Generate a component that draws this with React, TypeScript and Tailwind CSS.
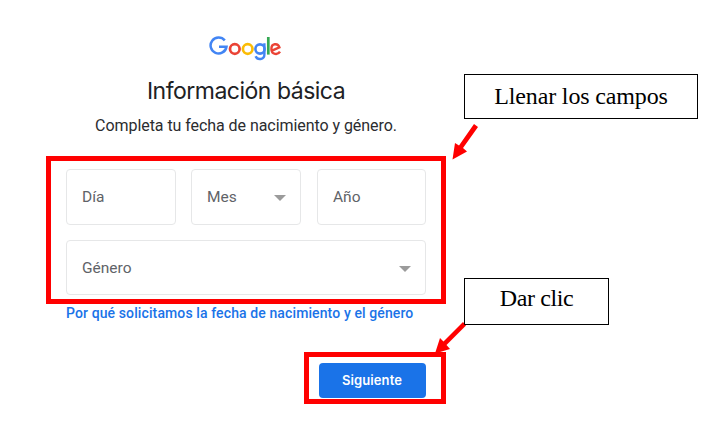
import React from "react";

function GoogleLogo() {
  return (
    <svg width="74" height="26" viewBox="208 36 74 26" fill="none" role="img" aria-label="Google">
      <path d="M223.8 40.4A8 8 0 1 0 225.5 46.7H218" stroke="#4285f4" strokeWidth="2.5" />
      <circle cx="233.8" cy="49" r="4.8" stroke="#ea4335" strokeWidth="2.7" />
      <circle cx="246.7" cy="49" r="4.8" stroke="#fbbc05" strokeWidth="2.7" />
      <circle cx="259" cy="49" r="4.6" stroke="#4285f4" strokeWidth="2.6" />
      <path d="M263.4 43.3V54.2C263.4 60 256.5 60.5 254.6 56.2" stroke="#4285f4" strokeWidth="2.4" />
      <path d="M267.3 37V54.6" stroke="#34a853" strokeWidth="2.7" />
      <path d="M271 50.6L278.4 47.3C276.9 42.8 270.2 43 270.4 49.2C270.6 54.7 276.8 55.3 279 51.6" stroke="#ea4335" strokeWidth="2.4" />
    </svg>
  );
}

function Caret() {
  return (
    <svg width="12" height="6" viewBox="0 0 12 6">
      <path d="M0 0H12L6 6Z" fill="#9b9b9b" />
    </svg>
  );
}

function Field({ label, select }: { label: string; select?: boolean }) {
  return (
    <div className="flex h-full items-center justify-between rounded-[4px] border border-[#e6e7e8] pl-[15px] pr-3.5 pt-0.5 text-[15.5px] text-[#5f6368]">
      <span>{label}</span>
      {select && <Caret />}
    </div>
  );
}

export default function App() {
  return (
    <div className="relative flex h-[436px] w-[705px] items-start overflow-hidden bg-white font-['Roboto',sans-serif]">
      <main className="flex w-[400px] flex-col pt-9 ml-[46px]">
        <header className="flex flex-col items-center">
          <GoogleLogo />
          <h1 className="mt-[13px] h-8 whitespace-nowrap font-['Inter',sans-serif] text-[23px] leading-8 tracking-[-0.5px] text-[#202124]">
            Información básica
          </h1>
          <p className="mt-[9px] h-5 whitespace-nowrap text-[16px] leading-5 tracking-[-0.06px] text-[#2b2c2f]">
            Completa tu fecha de nacimiento y género.
          </p>
        </header>
        <section className="mt-5 flex h-[148px] flex-col gap-[15px] border-[5px] border-[#ff0000] px-[15px] pt-2">
          <div className="flex h-14 shrink-0">
            <div className="mr-[15px] w-[110px]">
              <Field label="Día" />
            </div>
            <div className="mr-4 w-[110px]">
              <Field label="Mes" select />
            </div>
            <div className="w-[109px]">
              <Field label="Año" />
            </div>
          </div>
          <div className="h-[55px] shrink-0">
            <Field label="Género" select />
          </div>
        </section>
        <a className="ml-5 h-[18px] whitespace-nowrap text-[14px] font-medium leading-[18px] tracking-[0.11px] text-[#1a73e8]">
          Por qué solicitamos la fecha de nacimiento y el género
        </a>
        <div className="mt-[30px] flex h-[52px] w-[142px] self-end border-[5px] border-[#ff0000] pl-2.5 pt-1.5">
          <button className="h-[35px] w-[107px] rounded-[4px] bg-[#1a73e8] pt-px pr-px font-['Inter',sans-serif] text-[13px] font-semibold tracking-[0.1px] text-white">
            Siguiente
          </button>
        </div>
      </main>
      <aside className="ml-[18px] flex flex-col items-start pt-[74px] font-['Liberation_Serif',serif] text-black">
        <div className="flex h-[45px] w-[234px] items-center justify-center whitespace-nowrap border border-black pb-0.5 text-[24px]">
          <span className="tracking-[-0.15px]">Llenar los campos</span>
        </div>
        <div className="mt-[159px] flex h-[47px] w-[145px] items-center justify-center whitespace-nowrap border border-black pb-[7px] text-[24px]">
          <span className="tracking-[-0.4px]">Dar clic</span>
        </div>
      </aside>
      <svg className="pointer-events-none absolute left-0 top-0" width="705" height="436" viewBox="0 0 705 436" fill="#ff0000">
        <path d="M474 124L478 127L463 148L467 151.5L452.5 159.5L455 143L459 145.5Z" />
        <path d="M463 322L466 325.5L446.5 345L450 349L435 353.5L440 338L443.5 341.5Z" />
        <path d="M464.5 310V324.5H480" fill="none" stroke="#000" />
      </svg>
    </div>
  );
}
